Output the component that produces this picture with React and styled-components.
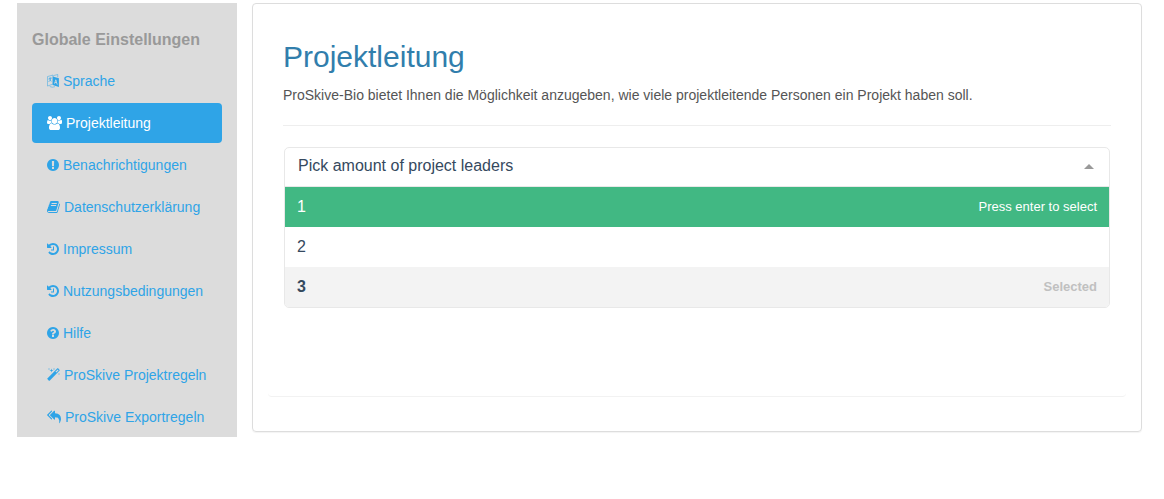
import React, { useState } from "react";
import styled, { createGlobalStyle } from "styled-components";

const GlobalStyle = createGlobalStyle`
  * { box-sizing: border-box; }
  body {
    margin: 0;
    background: #fff;
    color: #555;
    font-family: "Liberation Sans", Arial, sans-serif;
    font-size: 14px;
    line-height: 20px;
  }
`;

const Page = styled.div`
  display: flex;
  align-items: flex-start;
  gap: 15px;
  padding: 3px 22px 20px 17px;
`;

const Sidebar = styled.nav`
  flex: 0 0 220px;
  padding: 27px 15px 0;
  background: #dcdcdc;
`;

const SidebarTitle = styled.h2`
  margin: 0 0 11px;
  color: #999;
  font-size: 16px;
  line-height: 20px;
  font-weight: bold;
`;

const NavList = styled.ul`
  display: flex;
  flex-direction: column;
  gap: 2px;
  margin: 0;
  padding: 0;
  list-style: none;
`;

const NavLink = styled.a`
  display: flex;
  align-items: center;
  gap: 4px;
  padding: 10px 15px;
  border-radius: 4px;
  color: ${(p) => (p.$active ? "#fff" : "#2fa4e7")};
  background: ${(p) => (p.$active ? "#2fa4e7" : "transparent")};
  text-decoration: none;
  white-space: nowrap;
`;

const Icon = styled.svg`
  flex: none;
  width: ${(p) => p.$width}px;
  height: 14px;
  fill: currentColor;
`;

const Card = styled.main`
  flex: 1;
  min-width: 0;
  padding: 15px 15px 34px;
  border: 1px solid #ddd;
  border-radius: 4px;
  box-shadow: 0 1px 1px rgba(0, 0, 0, 0.05);
`;

const Panel = styled.section`
  min-height: 378px;
  padding: 21px 15px;
  border-bottom: 1px solid #f2f2f2;
  border-radius: 4px;
`;

const Title = styled.h1`
  margin: 0 0 12px;
  color: #317eac;
  font-size: 30px;
  line-height: 33px;
  font-weight: normal;
`;

const Lead = styled.p`
  margin: 0 0 20px;
`;

const Divider = styled.hr`
  margin: 0 0 21px;
  border: 0;
  border-top: 1px solid #eee;
`;

const Select = styled.div`
  margin: 0 1px;
  border: 1px solid #e8e8e8;
  border-radius: 5px;
  overflow: hidden;
  color: #35495e;
  font-size: 16px;
`;

const Control = styled.div`
  display: flex;
  align-items: center;
  padding: 8px 15px 10px 8px;
`;

const Search = styled.input`
  flex: 1;
  min-width: 0;
  height: 20px;
  padding: 0 0 0 5px;
  border: 0;
  outline: 0;
  background: transparent;
  color: inherit;
  font: inherit;
  &::placeholder { color: #35495e; opacity: 1; }
`;

const Toggle = styled.button`
  display: flex;
  padding: 0;
  border: 0;
  background: none;
  color: #999;
  cursor: pointer;
`;

const Caret = styled.span`
  border: solid transparent;
  border-width: 0 5px 5px;
  border-bottom-color: currentColor;
`;

const Options = styled.ul`
  margin: 0;
  padding: 0;
  border-top: 1px solid #e8e8e8;
  list-style: none;
`;

const tones = {
  highlight: { bg: "#41b883", fg: "#fff", hint: "#fff", weight: "normal" },
  plain: { bg: "#fff", fg: "#35495e", hint: "#35495e", weight: "normal" },
  selected: { bg: "#f3f3f3", fg: "#35495e", hint: "#c0c0c0", weight: "bold" },
};

const Option = styled.li`
  display: flex;
  align-items: center;
  justify-content: space-between;
  height: 40px;
  padding: 0 12px;
  background: ${(p) => tones[p.$tone].bg};
  color: ${(p) => tones[p.$tone].fg};
  font-weight: ${(p) => tones[p.$tone].weight};
  cursor: pointer;
`;

const Hint = styled.span`
  color: ${(p) => tones[p.$tone].hint};
  font-size: 13px;
`;

const icons = {
  language: {
    box: "128 0 1536 1792",
    width: 12,
    shape: (
      <>
        <path d="M190 330L900 130V1290L190 1540Z" fill="none" stroke="currentColor" strokeWidth="90" opacity=".7" />
        <path d="M330 620L720 500M520 420V560M640 540Q560 850 330 1010M400 680Q520 850 700 930" fill="none" stroke="currentColor" strokeWidth="90" />
        <path d="M860 310L1650 550V1650L860 1410ZM1215 690L1040 1230L1140 1260L1185 1130L1345 1180L1390 1330L1490 1360L1315 720ZM1265 850L1320 1060L1215 1027Z" fillRule="evenodd" />
        <path d="M980 200L1500 60V420M480 1600Q800 1780 1150 1620" fill="none" stroke="currentColor" strokeWidth="90" opacity=".7" />
      </>
    ),
  },
  users: {
    box: "0 0 1920 1792",
    width: 15,
    shape: <path d="M593 896q-162 5-265 128h-134q-82 0-138-40.5t-56-118.5q0-353 124-353 6 0 43.5 21t97.5 42.5 119 21.5q67 0 133-23-5 37-5 66 0 159 93 290zm1071 637q0 120-73 189.5t-194 69.5h-874q-121 0-194-69.5t-73-189.5q0-53 3.5-103.5t14-109 26.5-108.5 43-97.5 62-81 85.5-53.5 111.5-20q10 0 43 21.5t73 48 107 48 135 21.5 135-21.5 107-48 73-48 43-21.5q61 0 111.5 20t85.5 53.5 62 81 43 97.5 26.5 108.5 14 109 3.5 103.5zm-1024-1277q0 106-75 181t-181 75-181-75-75-181 75-181 181-75 181 75 75 181zm704 384q0 159-112.5 271.5t-271.5 112.5-271.5-112.5-112.5-271.5 112.5-271.5 271.5-112.5 271.5 112.5 112.5 271.5zm576 225q0 78-56 118.5t-138 40.5h-134q-103-123-265-128 93-131 93-290 0-29-5-66 66 23 133 23 59 0 119-21.5t97.5-42.5 43.5-21q124 0 124 353zm-128-609q0 106-75 181t-181 75-181-75-75-181 75-181 181-75 181 75 75 181z" />,
  },
  alert: {
    box: "128 0 1536 1792",
    width: 12,
    shape: <path d="M896 128q209 0 385.5 103t279.5 279.5 103 385.5-103 385.5-279.5 279.5-385.5 103-385.5-103-279.5-279.5-103-385.5 103-385.5 279.5-279.5 385.5-103zm128 1247v-190q0-14-9-23.5t-22-9.5h-192q-13 0-23 10t-10 23v190q0 13 10 23t23 10h192q13 0 22-9.5t9-23.5zm-2-344l18-621q0-12-10-18-10-8-24-8h-220q-14 0-24 8-10 6-10 18l17 621q0 10 10 17.5t24 7.5h185q14 0 23.5-7.5t10.5-17.5z" />,
  },
  book: {
    box: "64 0 1664 1792",
    width: 13,
    shape: <path d="M1703 478q40 57 18 129l-275 906q-19 64-76.5 107.5t-122.5 43.5h-923q-77 0-148.5-53.5t-99.5-131.5q-24-67-2-127 0-4 3-27t4-37q1-8-3-21.5t-3-19.5q2-11 8-21t16.5-23.5 16.5-23.5q23-38 45-91.5t30-91.5q3-10 .5-30t-.5-28q3-11 17-28t17-23q21-36 42-92t25-90q1-9-2.5-32t.5-28q4-13 22-30.5t22-22.5q19-26 42.5-84.5t27.5-96.5q1-8-3-25.5t-2-26.5q2-8 9-18t18-23 17-21q8-12 16.5-30.5t15-35 16-36 19.5-32 26.5-23.5 36-11.5 47.5 5.5l-1 3q38-9 51-9h761q74 0 114 56t18 130l-274 906q-36 119-71.5 153.5t-128.5 34.5h-869q-27 0-38 15-11 16-1 43 24 70 144 70h923q29 0 56-15.5t35-41.5l300-987q7-22 5-57 38 15 59 43zm-1064 2q-4 13 2 22.5t20 9.5h608q13 0 25.5-9.5t16.5-22.5l21-64q4-13-2-22.5t-20-9.5h-608q-13 0-25.5 9.5t-16.5 22.5zm-83 256q-4 13 2 22.5t20 9.5h608q13 0 25.5-9.5t16.5-22.5l21-64q4-13-2-22.5t-20-9.5h-608q-13 0-25.5 9.5t-16.5 22.5z" />,
  },
  history: {
    box: "128 0 1536 1792",
    width: 12,
    shape: <path d="M1664 896q0 156-61 298t-164 245-245 164-298 61q-172 0-327-72.5t-264-204.5q-7-10-6.5-22.5t8.5-20.5l137-138q10-9 25-9 16 2 23 12 73 95 179 147t225 52q104 0 198.5-40.5t163.5-109.5 109.5-163.5 40.5-198.5-40.5-198.5-109.5-163.5-163.5-109.5-198.5-40.5q-98 0-188 35.5t-160 101.5l137 138q31 30 14 69-17 40-59 40h-448q-26 0-45-19t-19-45v-448q0-42 40-59 39-17 69 14l130 129q107-101 244.5-156.5t284.5-55.5q156 0 298 61t245 164 164 245 61 298zm-640-288v448q0 14-9 23t-23 9h-320q-14 0-23-9t-9-23v-64q0-14 9-23t23-9h224v-352q0-14 9-23t23-9h64q14 0 23 9t9 23z" />,
  },
  help: {
    box: "128 0 1536 1792",
    width: 12,
    shape: <path d="M1024 1376v-192q0-14-9-23t-23-9h-192q-14 0-23 9t-9 23v192q0 14 9 23t23 9h192q14 0 23-9t9-23zm256-672q0-88-55.5-163t-138.5-116-170-41q-243 0-371 213-15 24 8 42l132 100q7 6 19 6 16 0 25-12 53-68 86-92 34-24 86-24 48 0 85.5 26t37.5 59q0 38-20 61t-68 45q-63 28-115.5 86.5t-52.5 125.5v36q0 14 9 23t23 9h192q14 0 23-9t9-23q0-19 21.5-49.5t54.5-49.5q32-18 49-28.5t46-35 44.5-48 28-60.5 12.5-81zm384 192q0 209-103 385.5t-279.5 279.5-385.5 103-385.5-103-279.5-279.5-103-385.5 103-385.5 279.5-279.5 385.5-103 385.5 103 279.5 279.5 103 385.5z" />,
  },
  magic: {
    box: "64 0 1664 1792",
    width: 13,
    shape: <path d="M1254 581l293-293-107-107-293 293zm447-293q0 27-18 45l-1286 1286q-18 18-45 18t-45-18l-198-198q-18-18-18-45t18-45l1286-1286q18-18 45-18t45 18l198 198q18 18 18 45zm-1351-190l98 30-98 30-30 98-30-98-98-30 98-30 30-98zm350 162l196 60-196 60-60 196-60-196-196-60 196-60 60-196zm930 478l98 30-98 30-30 98-30-98-98-30 98-30 30-98zm-640-640l98 30-98 30-30 98-30-98-98-30 98-30 30-98z" />,
  },
  replyAll: {
    box: "0 0 1792 1792",
    width: 14,
    shape: <path d="M640 1082v70q0 42-39 59-13 5-25 5-27 0-45-19l-512-512q-19-19-19-45t19-45l512-512q29-31 70-14 39 17 39 59v69l-397 398q-19 19-19 45t19 45zm1152 58q0 58-17 133.5t-38.5 138-48 125-40.5 90.5l-20 40q-8 17-28 17-6 0-9-1-25-8-23-34 43-400-106-565-64-71-170.5-110.5t-267.5-52.5v251q0 42-39 59-13 5-25 5-27 0-45-19l-512-512q-19-19-19-45t19-45l512-512q29-31 70-14 39 17 39 59v262q411 28 599 221 169 173 169 509z" />,
  },
};

const navItems = [
  { id: "sprache", icon: "language", label: "Sprache" },
  { id: "projektleitung", icon: "users", label: "Projektleitung" },
  { id: "benachrichtigungen", icon: "alert", label: "Benachrichtigungen" },
  { id: "datenschutz", icon: "book", label: "Datenschutzerklärung" },
  { id: "impressum", icon: "history", label: "Impressum" },
  { id: "nutzung", icon: "history", label: "Nutzungsbedingungen" },
  { id: "hilfe", icon: "help", label: "Hilfe" },
  { id: "projektregeln", icon: "magic", label: "ProSkive Projektregeln" },
  { id: "exportregeln", icon: "replyAll", label: "ProSkive Exportregeln" },
];

function NavItem({ item, active }) {
  const icon = icons[item.icon];
  return (
    <li>
      <NavLink href={`#${item.id}`} $active={active} aria-current={active ? "page" : undefined}>
        <Icon $width={icon.width} viewBox={icon.box} aria-hidden="true">
          {icon.shape}
        </Icon>
        {item.label}
      </NavLink>
    </li>
  );
}

function LeaderSelect() {
  const [open, setOpen] = useState(true);
  const [selected, setSelected] = useState(3);
  const [pointed, setPointed] = useState(1);
  return (
    <Select>
      <Control>
        <Search
          role="combobox"
          aria-label="Pick amount of project leaders"
          aria-expanded={open}
          aria-controls="leader-options"
          placeholder="Pick amount of project leaders"
          onFocus={() => setOpen(true)}
        />
        <Toggle type="button" aria-label="Toggle options" onClick={() => setOpen(!open)}>
          <Caret />
        </Toggle>
      </Control>
      {open && (
        <Options id="leader-options" role="listbox">
          {[1, 2, 3].map((n) => {
            const tone = n === pointed ? "highlight" : n === selected ? "selected" : "plain";
            return (
              <Option
                key={n}
                role="option"
                aria-selected={n === selected}
                $tone={tone}
                onMouseEnter={() => setPointed(n)}
                onClick={() => setSelected(n)}
              >
                {n}
                {tone === "highlight" && <Hint $tone={tone}>Press enter to select</Hint>}
                {tone === "selected" && <Hint $tone={tone}>Selected</Hint>}
              </Option>
            );
          })}
        </Options>
      )}
    </Select>
  );
}

export default function App() {
  return (
    <>
      <GlobalStyle />
      <Page>
        <Sidebar aria-label="Globale Einstellungen">
          <SidebarTitle>Globale Einstellungen</SidebarTitle>
          <NavList>
            {navItems.map((item) => (
              <NavItem key={item.id} item={item} active={item.id === "projektleitung"} />
            ))}
          </NavList>
        </Sidebar>
        <Card>
          <Panel>
            <Title>Projektleitung</Title>
            <Lead>
              ProSkive-Bio bietet Ihnen die Möglichkeit anzugeben, wie viele projektleitende Personen ein Projekt haben soll.
            </Lead>
            <Divider />
            <LeaderSelect />
          </Panel>
        </Card>
      </Page>
    </>
  );
}
